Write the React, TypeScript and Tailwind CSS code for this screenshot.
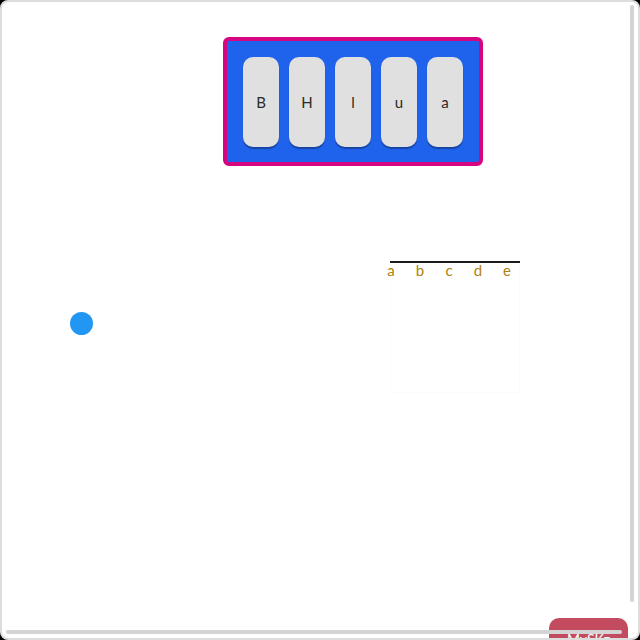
import React from "react";

export default function App() {
  const letters = ["B", "H", "l", "u", "a"];
  const cols = ["a", "b", "c", "d", "e"];
  return (
    <div className="w-[640px] h-[640px] bg-black" style={{ fontFamily: "Lato, 'Open Sans', sans-serif" }}>
      <div className="relative w-full h-full rounded-[8px] border-2 border-[#dddddd] bg-white overflow-hidden">
        <div className="ml-[221px] mt-[35px] w-[260px] h-[129px] rounded-[6px] border-4 border-[#d6047f] bg-[#1f62eb] px-[16px] pt-[16px] flex gap-[10px]">
          {letters.map((l) => (
            <div
              key={l}
              className="w-[36px] h-[90px] rounded-[10px] bg-[#e0e0e0] shadow-[0_2px_1px_rgba(0,0,0,0.3)] flex items-center justify-center text-[15px] text-[#2a2a2a]"
            >
              {l}
            </div>
          ))}
        </div>
        <div className="flex items-start mt-[95px]">
          <div className="ml-[68px] mt-[51px] w-[23px] h-[23px] rounded-full bg-[#2196f3]" />
          <div className="ml-[297px] w-[130px] h-[131px] border-t-2 border-[#1a1a1a]">
            <div className="relative h-[130px] border border-t-0 border-[#fbfbfb]">
              <div className="absolute left-[-7px] top-[-1px] flex gap-[15px] text-[15px] leading-[16px] text-[#b07f10]">
                {cols.map((c) => (
                  <span key={c} className="w-[14px] text-center">{c}</span>
                ))}
              </div>
            </div>
          </div>
        </div>
        <div className="absolute left-[547px] top-[616px] w-[79px] h-[40px] rounded-[10px] bg-[#c34b60] text-white text-[14px] flex justify-center pt-[10px]">
          MySKz
        </div>
        <div className="absolute left-[628px] top-[3px] w-[4px] h-[597px] rounded-full bg-[#d4d4d4]" />
        <div className="absolute left-[4px] top-[628px] w-[616px] h-[4px] rounded-full bg-[#d4d4d4]" />
      </div>
    </div>
  );
}
